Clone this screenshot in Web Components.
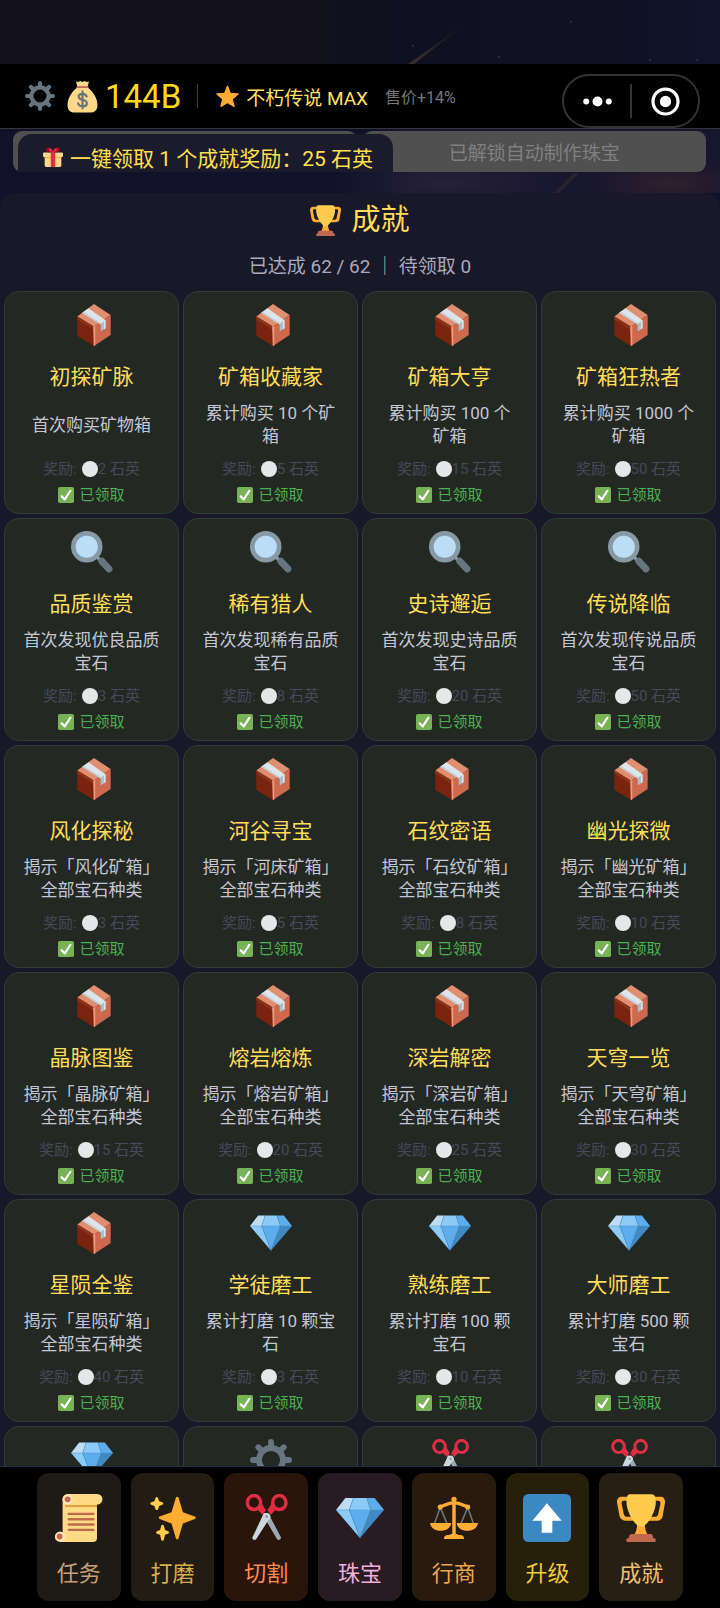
<!DOCTYPE html>
<html lang="zh-CN">
<head>
<meta charset="utf-8">
<meta name="viewport" content="width=device-width, initial-scale=1">
<title>成就</title>
<style>
  html, body {
    margin: 0;
    height: 100%;
    background: #000;
  }

  body {
    font-family: Roboto, "Noto Sans CJK SC", sans-serif;
    color: #c4c6d4;
  }
</style>
</head>
<body>
<game-app></game-app>

<script>
(() => {
  const icons = {
    gem: `
      <path fill="#bdddf4" d="M13 3H7l-7 9h10z"/>
      <path fill="#5dadec" d="M36 12l-7-9h-6l3 9z"/>
      <path fill="#4289c1" d="M26 12h10L18 33z"/>
      <path fill="#8ccaf7" d="M10 12H0l18 21zm3-9l-3 9h16l-3-9z"/>
      <path fill="#5dadec" d="M18 33l-8-21h16z"/>
      <path fill="none" stroke="#4a93cc" stroke-width=".4" d="M0 12h36M13 3l-3 9 8 21 8-21-3-9"/>`,
    trophy: `
      <path fill="#ffac33" d="M5.123 5h6C12.227 5 13 4.896 13 6V4c0-1.104-.773-2-1.877-2h-8c-2 0-3.583 2.125-3 5 0 0 1.791 9.375 1.917 9.958C2.373 18.5 4.164 20 6.081 20h6.958c1.105 0-.039-1.896-.039-3v-2c0 1.104-.773 2-1.877 2h-4c-1.104 0-1.833-1.042-2-2S3.539 7.667 3.539 7.667C3.206 5.75 4.018 5 5.123 5zm25.812 0h-6C23.831 5 22 4.896 22 6V4c0-1.104 1.831-2 2.935-2h8c2 0 3.584 2.125 3 5 0 0-1.633 9.419-1.771 10-.354 1.5-2.042 3-4 3h-7.146C21.914 20 22 18.104 22 17v-2c0 1.104 1.831 2 2.935 2h4c1.104 0 1.834-1.042 2-2s1.584-7.333 1.584-7.333C32.851 5.75 32.04 5 30.935 5z"/>
      <path fill="#ffac33" d="M20.832 22c0-6.958-2.709 0-2.709 0s-3-6.958-3 0-3.291 10-3.291 10h12.292s-3.292-3.042-3.292-10z"/>
      <path fill="#ffcc4d" d="M29.123 6.577c0 6.775-6.77 18.192-11 18.192-4.231 0-11-11.417-11-18.192 0-5.195 1-6.319 3-6.319 1.374 0 6.025-.027 8-.027l7-.001c2.917-.001 4 .684 4 6.347z"/>
      <path fill="#c1694f" d="M27 33c0 1.104.227 2-.877 2h-16C9.018 35 9 34.104 9 33v-1c0-1.104 1.164-2 2.206-2h13.917c1.042 0 1.877.896 1.877 2v1z"/>
      <path fill="#c1694f" d="M29 34.625c0 .76.165 1.375-1.252 1.375H8.498C7.206 36 7 35.385 7 34.625v-.25C7 33.615 7.738 33 8.498 33h19.25c.759 0 1.252.615 1.252 1.375v.25z"/>`,
    sparkles: `
      <path fill="#ffac33" d="M34.347 16.893l-8.899-3.294-3.323-10.891c-.128-.42-.517-.708-.956-.708-.439 0-.828.288-.956.708l-3.322 10.891-8.9 3.294c-.393.146-.653.519-.653.938 0 .418.26.793.653.938l8.895 3.293 3.324 11.223c.126.424.516.715.959.715.442 0 .833-.291.959-.716l3.324-11.223 8.896-3.293c.391-.144.652-.518.652-.937 0-.418-.261-.792-.653-.938z"/>
      <path fill="#ffcc4d" d="M14.347 27.894l-2.314-.856-.9-3.3c-.118-.436-.513-.738-.964-.738-.451 0-.846.302-.965.737l-.9 3.3-2.313.856c-.393.146-.653.52-.653.938 0 .418.26.793.653.938l2.301.853.907 3.622c.112.444.511.756.97.756.459 0 .858-.312.97-.757l.907-3.622 2.301-.853c.393-.144.653-.519.653-.937 0-.418-.26-.793-.653-.937zM10.009 6.231l-2.364-.875-.876-2.365c-.145-.393-.519-.653-.938-.653-.418 0-.792.26-.938.653l-.875 2.365-2.365.875c-.393.146-.653.52-.653.938 0 .418.26.793.653.938l2.365.875.875 2.365c.146.393.52.653.938.653.418 0 .792-.26.938-.653l.875-2.365 2.365-.875c.393-.146.653-.52.653-.938 0-.418-.26-.792-.653-.938z"/>`,
    check: `
      <rect width="36" height="36" rx="4" fill="#77b255"/>
      <path fill="#fff" d="M29.28 6.362c-1.156-.751-2.704-.422-3.458.736L14.936 23.877l-5.029-4.65c-1.014-.938-2.596-.875-3.533.138-.937 1.014-.875 2.596.139 3.533l7.209 6.666c.48.445 1.09.665 1.696.665.673 0 1.534-.282 2.099-1.139.332-.506 12.5-19.27 12.5-19.27.751-1.159.421-2.707-.737-3.458z"/>`,
    up: `
      <rect width="36" height="36" rx="4" fill="#3b88c3"/>
      <path fill="#fff" d="M18 7l11 13h-7v9h-8v-9H7z"/>`,
    quartz: `<circle cx="18" cy="18" r="18" fill="#e6e7e8"/>`,
    star: `<path fill="#ffac33" stroke="#ffac33" stroke-width="2" stroke-linejoin="round" d="M18 2l4.500 11.200 12 .8-9.200 7.800 3 11.700L18 27.200 7.700 33.500l3-11.700L1.500 14l12-.8z"/>`,
    search: `
      <path stroke="#8899a6" stroke-width="3" d="M21 21l5 5"/>
      <path stroke="#66757f" stroke-width="6" stroke-linecap="round" d="M26.500 26l6 6.500"/>
      <circle cx="13.500" cy="13.500" r="11.500" fill="#bbddf5" stroke="#8899a6" stroke-width="4"/>`,
    gear: `
      <g stroke="#66757f" stroke-width="5" stroke-linecap="round">
        <path d="M18 2.500v5M18 28.500v5M2.500 18h5M28.500 18h5M7.100 7.100l3.500 3.500M25.400 25.400l3.500 3.500M7.100 28.900l3.500-3.500M25.400 10.600l3.500-3.500"/>
      </g>
      <circle cx="18" cy="18" r="10.300" fill="none" stroke="#66757f" stroke-width="5"/>`,
    package: `
      <path fill="#e08e70" d="M19.700 0L34 9.500 19.700 19.500 5.400 10.800z"/>
      <path fill="#7a2410" d="M5.400 10.800l14.300 8.700V36L5.400 27.200z"/>
      <path fill="#8f3018" d="M5.400 10.800l14.300 8.700v3L5.400 13z"/>
      <path fill="#cf694d" d="M34 9.500v17L19.700 36V19.500z"/>
      <path fill="#ec9b80" d="M19 19.200l1.800-.4v16.700l-1.300.5z"/>
      <path fill="#dce5eb" d="M9.600 7.600L15 3.600l14.600 10.400-4.100 3.600z"/>
      <path fill="#c3d1da" d="M9.600 7.600l1.200-.9L26.500 16.800l-1 .8z"/>
      <path fill="#a6bfcb" d="M25.500 17.600l4.100-3.600v6.500l-4.100 3z"/>
      <path fill="#dce5eb" d="M28.200 15.100l1.400-1.300v7l-1.400 1z"/>`,
    scissors: `
      <path fill="#99aab5" d="M15.500 15.500l4-1.500 9.700 18.500c.4 1.500-1.800 2.700-2.900 1.400z"/>
      <path fill="#ccd6dd" d="M20.500 15.500l-4-1.500L7.800 32.700c-.3 1.400 1.700 2.500 2.800 1.200L21.500 17z"/>
      <g fill="none" stroke="#dd2e44" stroke-width="2.600">
        <ellipse cx="9" cy="6.400" rx="5" ry="5.200"/>
        <ellipse cx="28" cy="6.400" rx="5" ry="5.200"/>
      </g>
      <path fill="#dd2e44" d="M11.500 11.500L13.500 5l4.500 7.200-2.700 3.300zM25.500 11.500L23.500 5 19 12.200l2.700 3.300z"/>
      <circle cx="18.500" cy="17" r="2.700" fill="#ccd6dd"/>
      <circle cx="18.500" cy="17" r="1" fill="#8899a6"/>`,
    scroll: `
      <path fill="#ffd983" d="M5.700 4a4 4 0 0 1 4-4h22a3.900 3.900 0 0 1 0 7.800h-.2V33a3 3 0 0 1-3 3H3.500v-5.500h2.200z"/>
      <path fill="#e39f3d" d="M7.500 8.200h24v1.600h-24z"/>
      <circle cx="9.500" cy="4" r="3.900" fill="#ffe8b6"/>
      <circle cx="9.500" cy="4" r="2.200" fill="#c1694f"/>
      <circle cx="3.800" cy="32" r="3.900" fill="#ffe8b6"/>
      <circle cx="3.500" cy="31.900" r="2.200" fill="#c1694f"/>
      <path stroke="#c1694f" stroke-width="1.800" stroke-linecap="round" d="M10.300 14.900h18.500M10.300 18.900h18.500M10.300 22.900h18.500M10.300 26.900h18.500"/>`,
    scales: `
      <path fill="none" stroke="#66757f" stroke-width="1.200" d="M7.700 10L3.500 22M7.700 10l5 12M28.300 10L23.300 22M28.300 10l4.200 12"/>
      <path fill="none" stroke="#ffac33" stroke-width="2.600" d="M18 3v28M7.500 9.500C11 9.500 12 6.500 18 6.500s7 3 10.500 3"/>
      <g fill="#ffac33">
        <circle cx="18" cy="4" r="2"/>
        <circle cx="7.700" cy="9.700" r="1.900"/>
        <circle cx="28.300" cy="9.700" r="1.900"/>
        <path d="M0 21.800h16c-.6 3.600-3.500 5.800-8 5.800S.6 25.400 0 21.800zM20 21.800h16c-.6 3.600-3.500 5.800-8 5.800s-7.400-2.200-8-5.800zM10.400 33.800c0-3 2.200-3 4.600-3.300 1-.8 5-.8 6 0 2.400.3 4.600.3 4.600 3.300z"/>
      </g>`,
    money: `
      <path fill="#fdd888" d="M11 1.500l2.500.8L15.500 1l2.500 1.300L20.500 1l2 1.300L25 1.500 23.500 8c7 5.500 10.800 12.500 10.800 19.500 0 5.500-3 8-8 8H9.700c-5 0-8-2.500-8-8C1.700 20.500 5.500 13.500 12.500 8z"/>
      <path stroke="#bf6952" stroke-width="1.700" stroke-linecap="round" d="M12 7.800h12"/>
      <path fill="none" stroke="#67757f" stroke-width="2.400" stroke-linecap="round" d="M22.500 18c-.8-3.500-8.500-4-8.700.2 0 4.500 9.200 2.300 9 7.300-.2 4.500-8.800 4-9.600 0M18 12.500v18.500"/>`,
    gift: `
      <path fill="#fdd888" d="M3 17h30v16a3 3 0 0 1-3 3H6a3 3 0 0 1-3-3z"/>
      <path fill="#fcab40" d="M3 17h30v3H3z"/>
      <rect y="10" width="36" height="8" rx="2" fill="#fdd888"/>
      <path fill="#dd2e44" d="M14 10h8v26h-8z"/>
      <path fill="#a0041e" d="M18 10L7 9C5 5 5 1 9 1c5 0 8 5 9 9zM18 10l11-1c2-4 2-8-2-8-5 0-8 5-9 9z"/>
      <path fill="#dd2e44" d="M18 10l-7-3c-1-3 0-5 2-5 3 1 5 5 5 8zM18 10l7-3c1-3 0-5-2-5-3 1-5 5-5 8z"/>`,
    more: `
      <g fill="#fff">
        <circle cx="4" cy="18" r="3.700"/>
        <circle cx="18" cy="18" r="6.200"/>
        <circle cx="32" cy="18" r="3.700"/>
      </g>`,
    target: `
      <circle cx="18" cy="18" r="15.500" fill="none" stroke="#fff" stroke-width="4"/>
      <circle cx="18" cy="18" r="7" fill="#fff"/>`
  }

  const achievements = [
    ['package', '初探矿脉', '首次购买矿物箱', 2],
    ['package', '矿箱收藏家', '累计购买 10 个矿箱', 5],
    ['package', '矿箱大亨', '累计购买 100 个矿箱', 15],
    ['package', '矿箱狂热者', '累计购买 1000 个矿箱', 50],
    ['search', '品质鉴赏', '首次发现优良品质宝石', 3],
    ['search', '稀有猎人', '首次发现稀有品质宝石', 8],
    ['search', '史诗邂逅', '首次发现史诗品质宝石', 20],
    ['search', '传说降临', '首次发现传说品质宝石', 50],
    ['package', '风化探秘', '揭示「风化矿箱」全部宝石种类', 3],
    ['package', '河谷寻宝', '揭示「河床矿箱」全部宝石种类', 5],
    ['package', '石纹密语', '揭示「石纹矿箱」全部宝石种类', 8],
    ['package', '幽光探微', '揭示「幽光矿箱」全部宝石种类', 10],
    ['package', '晶脉图鉴', '揭示「晶脉矿箱」全部宝石种类', 15],
    ['package', '熔岩熔炼', '揭示「熔岩矿箱」全部宝石种类', 20],
    ['package', '深岩解密', '揭示「深岩矿箱」全部宝石种类', 25],
    ['package', '天穹一览', '揭示「天穹矿箱」全部宝石种类', 30],
    ['package', '星陨全鉴', '揭示「星陨矿箱」全部宝石种类', 40],
    ['gem', '学徒磨工', '累计打磨 10 颗宝石', 3],
    ['gem', '熟练磨工', '累计打磨 100 颗宝石', 10],
    ['gem', '大师磨工', '累计打磨 500 颗宝石', 30],
    ['gem'],
    ['gear'],
    ['scissors'],
    ['scissors']
  ]

  const tabs = [
    ['scroll', '任务', '#1e1a16', '#c4a07c'],
    ['sparkles', '打磨', '#231c12', '#d6b04c'],
    ['scissors', '切割', '#29150c', '#ff8a50'],
    ['gem', '珠宝', '#281c22', '#f0b0dc'],
    ['scales', '行商', '#281b0d', '#e8a850'],
    ['up', '升级', '#281f0a', '#f2cc34'],
    ['trophy', '成就', '#281f14', '#ecc274']
  ]

  class GameIcon extends HTMLElement {
    static observedAttributes = ['name']

    constructor() {
      super()
      this.attachShadow({ mode: 'open' })
    }

    attributeChangedCallback() {
      this.shadowRoot.innerHTML = `
        <style>
          :host {
            display: inline-block;
            flex: none;
            width: var(--size, 42px);
            height: var(--size, 42px);
          }
          svg { display: block; width: 100%; height: 100%; }
        </style>
        <svg viewBox="0 0 36 36" aria-hidden="true">${icons[this.getAttribute('name')] || ''}</svg>`
    }
  }

  customElements.define('game-icon', GameIcon)

  function define(name, html, setup) {
    const template = document.createElement('template')
    template.innerHTML = html
    customElements.define(name, class extends HTMLElement {
      constructor() {
        super()
        this.attachShadow({ mode: 'open' })
        this.shadowRoot.appendChild(document.importNode(template.content, true))
      }

      connectedCallback() {
        if (setup) setup(this, this.shadowRoot)
      }
    })
  }

  define('game-header', `
    <style>
      :host {
        display: flex;
        align-items: center;
        box-sizing: border-box;
        height: 65px;
        padding: 0 20px 0 25px;
        background: #000;
        border-bottom: 1px solid #34343c;
        white-space: nowrap;
      }
      button { padding: 0; border: 0; background: none; color: inherit; font: inherit; line-height: 0; cursor: pointer; }
      .settings { --size: 30px; margin-right: 11px; }
      .money { --size: 33px; margin-right: 6px; }
      .amount { font-size: 33px; color: #ffd91a; }
      .line { width: 1px; height: 24px; margin: 0 18px 0 16px; background: #3a3a3a; }
      .rank { display: flex; align-items: center; gap: 7px; font-size: 19px; color: #ffe066; }
      .star { --size: 23px; }
      .bonus { margin-left: 17px; font-size: 16px; color: #777; }
      .capsule {
        display: flex;
        align-items: center;
        align-self: flex-end;
        box-sizing: border-box;
        width: 138px;
        height: 54px;
        margin-left: auto;
        border: 2px solid #333;
        border-radius: 27px;
      }
      .capsule button { flex: 1; --size: 29px; }
      .capsule i { width: 2px; height: 34px; background: #333; }
    </style>
    <button class="settings" aria-label="设置"><game-icon name="gear"></game-icon></button>
    <game-icon class="money" name="money"></game-icon>
    <span class="amount">144B</span>
    <span class="line"></span>
    <span class="rank"><game-icon class="star" name="star"></game-icon>不朽传说 MAX</span>
    <span class="bonus">售价+14%</span>
    <div class="capsule">
      <button aria-label="更多"><game-icon name="more"></game-icon></button>
      <i></i>
      <button aria-label="关闭"><game-icon name="target"></game-icon></button>
    </div>
  `)

  define('craft-bar', `
    <style>
      :host {
        display: grid;
        grid-template-columns: 1fr 1fr;
        gap: 6px;
        position: relative;
        padding: 2px 14px 21px 13px;
        background:
          linear-gradient(135deg, transparent 42%, #2c2630 50%, transparent 58%) 552px 44px / 28px 21px no-repeat,
          radial-gradient(ellipse 80px 24px at 93% 85%, #30202e, transparent),
          radial-gradient(ellipse 120px 24px at 62% 85%, #242138, transparent),
          linear-gradient(90deg, #11122a 52%, #191730 56%, #17162c);
      }
      button {
        height: 41px;
        padding: 0;
        border: 0;
        border-radius: 9px;
        background: #505050;
        color: #808080;
        font: inherit;
        font-size: 19px;
      }
      .toast {
        position: absolute;
        top: 5px;
        left: 18px;
        display: flex;
        align-items: center;
        gap: 7px;
        box-sizing: border-box;
        height: 38px;
        padding: 7px 20px 0 25px;
        border-radius: 14px 14px 0 0;
        background: #1c1b2b;
        color: #ffe14d;
        font-size: 21px;
        white-space: nowrap;
        --size: 20px;
      }
    </style>
    <button disabled aria-label="制作珠宝"></button>
    <button disabled>已解锁自动制作珠宝</button>
    <div class="toast" role="status"><game-icon name="gift"></game-icon><slot></slot></div>
  `)

  define('achievement-card', `
    <style>
      :host {
        display: flex;
        flex-direction: column;
        align-items: center;
        box-sizing: border-box;
        min-height: 223px;
        padding: 12px 18px 8px;
        border: 1px solid #2f3d37;
        border-radius: 15px;
        background: #232823;
        text-align: center;
      }
      h3 {
        margin: 17px 0 11px;
        font-size: 21px;
        font-weight: 400;
        line-height: 28px;
        color: #ffdd57;
        white-space: nowrap;
      }
      .desc {
        display: flex;
        align-items: center;
        min-height: 46px;
        font-size: 17px;
        line-height: 23px;
      }
      .reward, .claimed {
        display: flex;
        align-items: center;
        font-size: 15px;
        line-height: 20px;
        --size: 16px;
        white-space: nowrap;
      }
      .reward { margin-top: 11px; color: #464959; }
      .reward game-icon { margin-left: 5px; }
      .claimed { gap: 5px; margin-top: 6px; color: #4caf50; }
    </style>
    <game-icon></game-icon>
  `, (host, root) => {
    root.querySelector('game-icon').setAttribute('name', host.getAttribute('icon'))
    if (!host.hasAttribute('reward')) return
    const body = document.createElement('template')
    body.innerHTML = `
      <h3><slot name="title"></slot></h3>
      <div class="desc"><span><slot></slot></span></div>
      <div class="reward"><span>奖励:</span><game-icon name="quartz"></game-icon><span>${host.getAttribute('reward')} 石英</span></div>
      <div class="claimed"><game-icon name="check"></game-icon>已领取</div>`
    root.appendChild(document.importNode(body.content, true))
  })

  define('achievement-panel', `
    <style>
      :host {
        display: block;
        border-radius: 16px 16px 0 0;
        background: #191828;
      }
      h2 {
        display: flex;
        align-items: center;
        justify-content: center;
        gap: 10px;
        margin: 0;
        padding-top: 9px;
        font-size: 29px;
        font-weight: 400;
        line-height: 36px;
        color: #ffdd57;
        --size: 31px;
      }
      p {
        margin: 15px 0 11px;
        font-size: 19px;
        line-height: 27px;
        text-align: center;
        color: #aaa9bd;
      }
      .grid {
        display: grid;
        grid-template-columns: repeat(4, minmax(0, 1fr));
        gap: 4px;
        padding: 0 4px;
      }
    </style>
    <h2><game-icon name="trophy"></game-icon>成就</h2>
    <p>已达成 62 / 62 ｜ 待领取 0</p>
    <div class="grid"></div>
  `, (host, root) => {
    const grid = root.querySelector('.grid')
    for (const [icon, title, desc, reward] of achievements) {
      const card = document.createElement('achievement-card')
      card.setAttribute('icon', icon)
      if (title) {
        card.setAttribute('reward', reward)
        card.innerHTML = `<span slot="title">${title}</span>${desc}`
      }
      grid.appendChild(card)
    }
  })

  define('tab-bar', `
    <style>
      :host {
        display: flex;
        gap: 10px;
        padding: 6px 37px 7px;
        border-top: 1px solid #232a44;
        background: #000;
      }
      button {
        display: flex;
        flex: 1;
        flex-direction: column;
        align-items: center;
        gap: 17px;
        padding: 21px 0 12px;
        border: 0;
        border-radius: 12px;
        font: inherit;
        font-size: 22px;
        line-height: 30px;
        cursor: pointer;
        --size: 48px;
      }
    </style>
  `, (host, root) => {
    for (const [icon, label, background, color] of tabs) {
      const button = document.createElement('button')
      button.innerHTML = `<game-icon name="${icon}"></game-icon><span>${label}</span>`
      button.style.background = background
      button.style.color = color
      root.appendChild(button)
    }
  })

  define('game-app', `
    <style>
      :host {
        display: flex;
        flex-direction: column;
        height: 100vh;
        overflow: hidden;
      }
      .sky {
        flex: none;
        height: 64px;
        background: linear-gradient(90deg, #13111d 40%, #0f101f 55%, #101225 90%, #11152c);
      }
      .sky svg { display: block; width: 100%; height: 100%; }
      main { flex: 1; min-height: 0; overflow: hidden; background: #121228; }
    </style>
    <div class="sky">
      <svg viewBox="0 0 720 64" preserveAspectRatio="none" aria-hidden="true">
        <defs>
          <linearGradient id="trail" x1="0" y1="1" x2="1" y2="0">
            <stop offset="0" stop-color="#3a3030"/>
            <stop offset="1" stop-color="#3a3030" stop-opacity="0"/>
          </linearGradient>
        </defs>
        <path fill="url(#trail)" d="M408 64l60-42-54 42z"/>
        <g fill="#2c3550">
          <circle cx="413" cy="46" r="1"/>
          <circle cx="499" cy="57" r="1"/>
          <circle cx="571" cy="22" r="1"/>
          <circle cx="650" cy="60" r="1"/>
          <circle cx="697" cy="60" r="1"/>
        </g>
      </svg>
    </div>
    <game-header></game-header>
    <main>
      <craft-bar>一键领取 1 个成就奖励：25 石英</craft-bar>
      <achievement-panel></achievement-panel>
    </main>
    <tab-bar></tab-bar>
  `)
})()
</script>
</body>
</html>
